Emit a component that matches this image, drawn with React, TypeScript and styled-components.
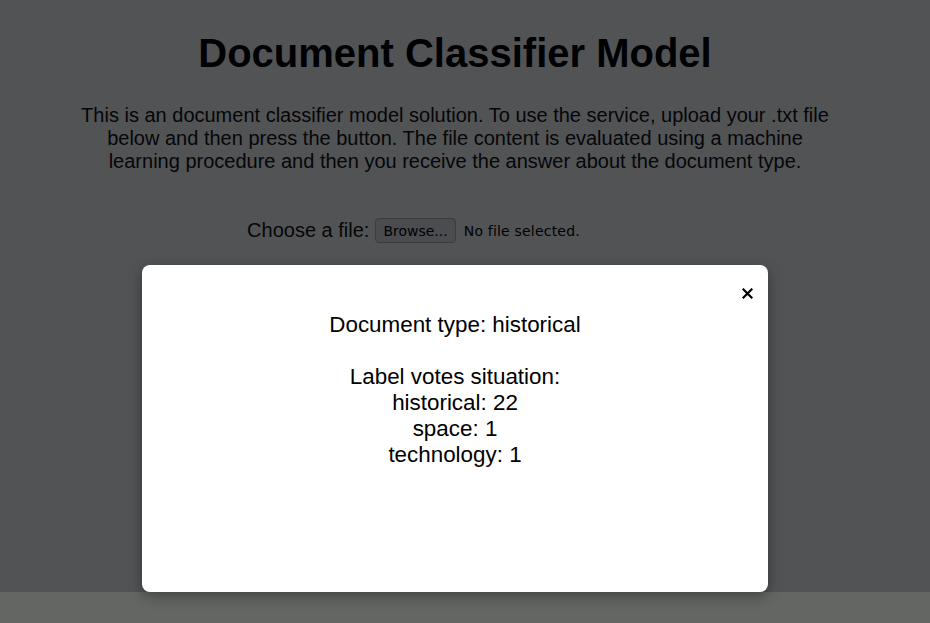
import styled, { createGlobalStyle } from 'styled-components';

const GlobalStyle = createGlobalStyle`
  html, body {
    margin: 0;
    padding: 0;
    height: 100%;
    background: #646664;
  }
  body {
    font-family: 'Liberation Sans', Arial, sans-serif;
    overflow: hidden;
  }
`;

const votes = [
  { label: 'historical', count: 22 },
  { label: 'space', count: 1 },
  { label: 'technology', count: 1 },
];

const App = () => {
  return (
    <>
      <GlobalStyle />
      <Page>
        <Title>Document Classifier Model</Title>
        <Intro>
          This is an document classifier model solution. To use the service,
          upload your .txt file below and then press the button. The file
          content is evaluated using a machine learning procedure and then you
          receive the answer about the document type.
        </Intro>
        <FileRow>
          <FileLabel>Choose a file:</FileLabel>
          <BrowseButton type="button">Browse...</BrowseButton>
          <FileStatus>No file selected.</FileStatus>
        </FileRow>

        <Overlay>
          <Modal>
            <CloseButton type="button" aria-label="close">
              <svg width="11" height="11" viewBox="0 0 11 11">
                <path
                  d="M1.5 1.5 L9.5 9.5 M9.5 1.5 L1.5 9.5"
                  stroke="#000"
                  strokeWidth="2.2"
                  strokeLinecap="square"
                />
              </svg>
            </CloseButton>
            <Result>
              <Line>Document type: historical</Line>
              <Spacer />
              <Line>Label votes situation:</Line>
              {votes.map((v) => (
                <Line key={v.label}>
                  {v.label}: {v.count}
                </Line>
              ))}
            </Result>
          </Modal>
        </Overlay>
      </Page>
    </>
  );
};

export default App;

const Page = styled.div`
  position: relative;
  height: 592px;
  background: #ffffff;
  color: #000;
  text-align: center;
  padding: 30px 20px 0 0;
  box-sizing: border-box;
`;

const Title = styled.h1`
  margin: 0;
  font-size: 40px;
  font-weight: bold;
  line-height: 46px;
`;

const Intro = styled.p`
  margin: 28px auto 0;
  width: 760px;
  font-size: 20px;
  line-height: 23px;
  color: #111;
`;

const FileRow = styled.div`
  margin-top: 45px;
  padding-right: 83px;
  display: flex;
  justify-content: center;
  align-items: center;
  gap: 6px;
`;

const FileLabel = styled.span`
  font-size: 20px;
  color: #111;
`;

const BrowseButton = styled.button`
  height: 25px;
  padding: 0 7px;
  border: 1px solid #b8b8b8;
  border-radius: 4px;
  background: #e9e9ed;
  font-family: 'DejaVu Sans', sans-serif;
  font-size: 14px;
  color: #000;
`;

const FileStatus = styled.span`
  margin-left: 2px;
  font-family: 'DejaVu Sans', sans-serif;
  font-size: 14px;
  letter-spacing: 0.2px;
  color: #000;
`;

const Overlay = styled.div`
  position: absolute;
  inset: 0;
  background: rgba(0, 2, 5, 0.68);
  display: flex;
  justify-content: center;
  align-items: flex-start;
  padding: 265px 20px 0 0;
  box-sizing: border-box;
`;

const Modal = styled.div`
  position: relative;
  width: 626px;
  height: 327px;
  background: #fff;
  border-radius: 8px;
  box-shadow: 0 4px 14px rgba(0, 0, 0, 0.35);
  padding-top: 47px;
  box-sizing: border-box;
`;

const CloseButton = styled.button`
  position: absolute;
  top: 21px;
  right: 14px;
  width: 14px;
  height: 14px;
  padding: 0;
  border: none;
  background: none;
  display: flex;
  align-items: center;
  justify-content: center;
  cursor: pointer;
`;

const Result = styled.div`
  display: flex;
  flex-direction: column;
  align-items: center;
  font-size: 22.4px;
  line-height: 26px;
  color: #000;
`;

const Line = styled.div``;

const Spacer = styled.div`
  height: 26px;
`;
